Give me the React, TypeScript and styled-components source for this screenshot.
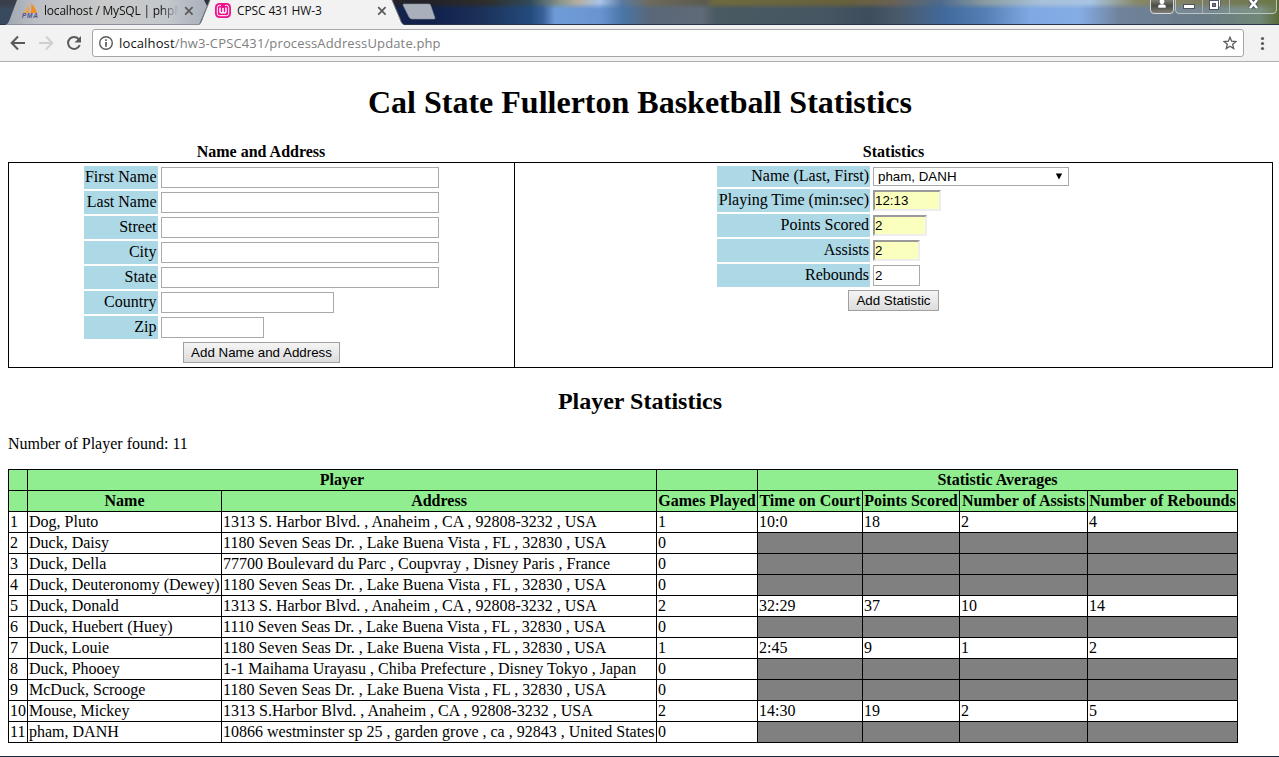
import React from "react";
import styled, { createGlobalStyle } from "styled-components";

const GlobalStyle = createGlobalStyle`
  html, body { margin: 0; padding: 0; background: #fff; overflow: hidden; }
  *, *::before, *::after { box-sizing: border-box; }
`;

const Window = styled.div`
  width: 1279px;
  height: 757px;
  display: flex;
  flex-direction: column;
  overflow: hidden;
  background: #fff;
  border-bottom: 1px solid #16263c;
`;

const TitleBar = styled.header`
  height: 25px;
  flex: none;
  position: relative;
  isolation: isolate;
  background: linear-gradient(90deg, #3a4a5e 0, #10204a 430px, #1b3158 480px, #234a7c 530px, #3a6098 543px, #6f9cd8 555px, #6a94d0 600px, #4a76a8 622px, #596778 650px, #606a78 702px, #4a5a62 715px, #465662 820px, #3d4d5c 870px, #4a5a6c 900px, #416a9c 945px, #557eb4 985px, #80a8e2 1030px, #85ace5 1080px, #70829a 1120px, #6a7c88 1200px, #708878 1260px, #5a6a38 1279px);
  border-bottom: 1px solid #2a3548;

  &::before {
    content: "";
    position: absolute;
    inset: 0;
    z-index: -1;
    background: linear-gradient(90deg, #3a3f49 0, #222228 430px, #2f2f2c 490px, #2f4a5a 530px, #8a9488 560px, #b5afa0 578px, #a8c4e8 600px, #5a7aa0 622px, #6f6a5a 650px, #5a5a50 705px, #6e6a3e 715px, #66603c 850px, #6b6152 890px, #4e6a8c 940px, #8a9ca0 985px, #a8c0d8 1040px, #a8c4e4 1090px, #8a8a6a 1135px, #707050 1200px, #5b6a35 1279px);
    mask-image: linear-gradient(#000 3px, transparent 9px);
  }
`;

const TabArt = styled.svg`
  position: absolute;
  left: 0;
  top: 0;
`;

const TabRow = styled.div`
  position: relative;
  display: flex;
  height: 24px;
`;

const Tab = styled.div<{ $width: number; $pad: number }>`
  width: ${(p) => p.$width}px;
  padding-left: ${(p) => p.$pad}px;
  display: flex;
  align-items: flex-start;
`;

const TabTitle = styled.span<{ $width: number; $fade?: boolean }>`
  width: ${(p) => p.$width}px;
  margin-left: ${(p) => (p.$fade ? 5 : 6)}px;
  white-space: nowrap;
  font: 12px/22px "Open Sans", sans-serif;
  letter-spacing: -0.13px;
  color: #111;
  ${(p) => p.$fade && "letter-spacing: -0.2px; mask-image: linear-gradient(90deg, #000 86%, transparent 99%);"}
`;

const CloseIcon = styled.svg`
  margin-top: 6px;
  flex: none;
`;

const WindowControls = styled.svg`
  position: absolute;
  right: 0;
  top: 0;
`;

const Toolbar = styled.div`
  height: 37px;
  flex: none;
  display: flex;
  align-items: center;
  background: #f2f2f2;
  border-bottom: 1px solid #b0b0b0;
`;

const NavIcons = styled.svg`
  flex: none;
`;

const AddressBar = styled.div`
  width: 1152px;
  height: 28px;
  display: flex;
  align-items: center;
  padding: 0 6px 0 5px;
  background: #fff;
  border: 1px solid #a6a6a6;
  border-radius: 3px;
`;

const Url = styled.span`
  flex: 1;
  margin-left: 5px;
  font: 13px/26px "Open Sans", sans-serif;
  letter-spacing: 0.14px;
  color: #808080;
  white-space: nowrap;
  b { font-weight: 400; color: #111; }
`;

const Page = styled.main`
  flex: 1;
  padding: 0 8px;
  font: 16px/19px "Liberation Serif", "Times New Roman", serif;
  color: #000;
`;

const Title = styled.h1`
  margin: 22px 0 0 1px;
  font-size: 32px;
  line-height: 37px;
  text-align: center;
`;

const Forms = styled.div`
  display: grid;
  grid-template-columns: 506px 759px;
  width: 1265px;
  margin-top: 21px;
`;

const FormHeading = styled.div`
  height: 20px;
  line-height: 20px;
  font-weight: 700;
  text-align: center;
`;

const Panel = styled.form<{ $last?: boolean }>`
  height: 206px;
  border: 1px solid #000;
  border-right-width: ${(p) => (p.$last ? 1 : 0)}px;
  padding-top: 3px;
  display: flex;
  flex-direction: column;
  align-items: center;
`;

const Fields = styled.div<{ $labels: number; $inputs: number }>`
  display: grid;
  grid-template-columns: ${(p) => p.$labels}px ${(p) => p.$inputs}px;
  gap: 2px;
`;

const Label = styled.label`
  display: block;
  padding: 1px 1px 0 0;
  line-height: 20px;
  text-align: right;
  white-space: nowrap;
  background: lightblue;
`;

const SelectLabel = styled(Label)`
  padding-top: 0;
`;

const FieldCell = styled.div`
  padding: 1px;
`;

const Input = styled.input<{ $width: number; $filled?: boolean }>`
  display: block;
  width: ${(p) => p.$width}px;
  height: 21px;
  margin: 0;
  padding: ${(p) => (p.$filled ? "0 0 1px 0" : "0 0 1px 1px")};
  border: ${(p) => (p.$filled ? "2px solid" : "1px solid #a9a9a9")};
  ${(p) => p.$filled && "border-color: #9a9a9a #eee #eee #9a9a9a;"}
  background: ${(p) => (p.$filled ? "#faffbd" : "#fff")};
  border-radius: 0;
  font: 13.33px "Liberation Sans", Arial, sans-serif;
  color: #000;
  outline: none;
`;

const SelectBox = styled.div`
  width: 196px;
  height: 19px;
  display: flex;
  align-items: center;
  justify-content: space-between;
  padding: 0 5px 0 4px;
  border: 1px solid #a9a9a9;
  font: 13.33px/17px "Liberation Sans", Arial, sans-serif;
`;

const Button = styled.button<{ $width: number }>`
  width: ${(p) => p.$width}px;
  height: 21px;
  margin-top: 3px;
  padding: 0;
  border: 1px solid #a0a0a0;
  border-radius: 0;
  background: linear-gradient(#f5f5f5, #dcdcdc);
  font: 13.33px/18px "Liberation Sans", Arial, sans-serif;
  color: #000;
  white-space: nowrap;
`;

const SubTitle = styled.h2`
  margin: 19px 0 0 1px;
  font-size: 24px;
  line-height: 28px;
  text-align: center;
`;

const Count = styled.p`
  margin: 20px 0 16px;
  line-height: 18px;
`;

const StatsTable = styled.table`
  table-layout: fixed;
  width: 1230px;
  border-collapse: separate;
  border-spacing: 0;
  border-top: 1px solid #000;
  border-left: 1px solid #000;
`;

const HeadCell = styled.th`
  height: 21px;
  padding: 0;
  border-right: 1px solid #000;
  border-bottom: 1px solid #000;
  background: lightgreen;
  line-height: 20px;
  white-space: nowrap;
`;

const Cell = styled.td<{ $empty?: boolean }>`
  height: 21px;
  padding: 0 0 0 1px;
  border-right: 1px solid #000;
  border-bottom: 1px solid #000;
  background: ${(p) => (p.$empty ? "gray" : "#fff")};
  line-height: 20px;
  white-space: nowrap;
`;

const addressFields: [string, number][] = [
  ["First Name", 278], ["Last Name", 278], ["Street", 278], ["City", 278],
  ["State", 278], ["Country", 173], ["Zip", 103],
];

const statFields: [string, number, string, boolean][] = [
  ["Playing Time (min:sec)", 68, "12:13", true],
  ["Points Scored", 54, "2", true],
  ["Assists", 47, "2", true],
  ["Rebounds", 47, "2", false],
];

const columns = [19, 194, 435, 101, 105, 97, 128, 150];

const players: [string, string, number, string[]?][] = [
  ["Dog, Pluto", "1313 S. Harbor Blvd. , Anaheim , CA , 92808-3232 , USA", 1, ["10:0", "18", "2", "4"]],
  ["Duck, Daisy", "1180 Seven Seas Dr. , Lake Buena Vista , FL , 32830 , USA", 0],
  ["Duck, Della", "77700 Boulevard du Parc , Coupvray , Disney Paris , France", 0],
  ["Duck, Deuteronomy (Dewey)", "1180 Seven Seas Dr. , Lake Buena Vista , FL , 32830 , USA", 0],
  ["Duck, Donald", "1313 S. Harbor Blvd. , Anaheim , CA , 92808-3232 , USA", 2, ["32:29", "37", "10", "14"]],
  ["Duck, Huebert (Huey)", "1110 Seven Seas Dr. , Lake Buena Vista , FL , 32830 , USA", 0],
  ["Duck, Louie", "1180 Seven Seas Dr. , Lake Buena Vista , FL , 32830 , USA", 1, ["2:45", "9", "1", "2"]],
  ["Duck, Phooey", "1-1 Maihama Urayasu , Chiba Prefecture , Disney Tokyo , Japan", 0],
  ["McDuck, Scrooge", "1180 Seven Seas Dr. , Lake Buena Vista , FL , 32830 , USA", 0],
  ["Mouse, Mickey", "1313 S.Harbor Blvd. , Anaheim , CA , 92808-3232 , USA", 2, ["14:30", "19", "2", "5"]],
  ["pham, DANH", "10866 westminster sp 25 , garden grove , ca , 92843 , United States", 0],
];

const Close = () => (
  <CloseIcon width="10" height="10" viewBox="0 0 10 10">
    <path d="M1.2 1.2l7.4 7.4M8.6 1.2L1.2 8.6" stroke="#5a5a5a" strokeWidth="1.7" />
  </CloseIcon>
);

const BrowserChrome = () => (
  <>
    <TitleBar>
      <TabArt width="450" height="25" viewBox="0 0 450 25">
        <defs>
          <linearGradient id="idle">
            <stop offset="0" stopColor="#9fa6b0" />
            <stop offset=".15" stopColor="#bcbfc4" />
            <stop offset=".5" stopColor="#c9c9c9" />
            <stop offset=".8" stopColor="#c3c8cd" />
            <stop offset="1" stopColor="#a9b0ba" />
          </linearGradient>
        </defs>
        <path d="M6 25C9 23 9.500 20 11 16L17 0H204L207 6 199 25z" fill="url(#idle)" />
        <path d="M6 24.500H199" stroke="#8b9098" />
        <path d="M199 25C201 23 202 20 203 17L210 0H392L400 19C401 22 402 24 404 25z" fill="#f2f2f2" />
        <path d="M199 24.500C201 23 202 20 203 17L210 0M392 0L400 19C401 22 402 24 404 25" fill="none" stroke="#767c85" />
        <path d="M404 4H429Q430 4 430.500 5L435 18Q435 19 434 19H412Q410 19 409 17L403 5Q403 4 404 4z" fill="#a9b0bb" stroke="#8b93a2" strokeWidth=".6" />
      </TabArt>
      <TabRow>
        <Tab $width={204} $pad={22}>
          <svg width="17" height="20" viewBox="0 0 17 20">
            <path d="M6.500 4L7 13H1.500C4 11 5.500 8 6.500 4z" fill="#f5a13c" />
            <path d="M9 3C12 6 14 9 15 13H8.500C9.500 10 9.500 7 9 3z" fill="#f28f24" />
            <text x="0" y="18" fontFamily="Liberation Sans, sans-serif" fontSize="6.500" fontWeight="700" fontStyle="italic" fill="#53548b" textLength="16">PMA</text>
          </svg>
          <TabTitle $width={136} $fade>localhost / MySQL | phpM</TabTitle>
          <span style={{ width: 4 }} />
          <Close />
        </Tab>
        <Tab $width={196} $pad={11}>
          <svg width="16" height="20" viewBox="0 0 16 20">
            <rect x="0" y="3" width="16" height="15" rx="4.500" fill="#f0128c" />
            <path d="M6 5.300H4.500Q2.300 5.300 2.300 7.500V13.500Q2.300 15.700 4.500 15.700H11.500Q13.700 15.700 13.700 13.500V7.500Q13.700 5.300 11.500 5.300H10" fill="none" stroke="#fff" strokeWidth="1" />
            <path d="M5 7.500V11Q5 13 6.500 13T8 11V8M8 11Q8 13 9.500 13T11 11V7.500" fill="none" stroke="#fff" strokeWidth="1.500" />
          </svg>
          <TabTitle $width={140}>CPSC 431 HW-3</TabTitle>
          <Close />
        </Tab>
      </TabRow>
      <WindowControls width="130" height="20" viewBox="1149 0 130 20">
        <defs>
          <linearGradient id="glass" x2="0" y2="1">
            <stop offset="0" stopColor="#8c8c80" />
            <stop offset=".5" stopColor="#4b4b47" />
            <stop offset="1" stopColor="#85857c" />
          </linearGradient>
        </defs>
        <path d="M1150.500 -2V10Q1150.500 13.500 1154 13.500H1170Q1173.500 13.500 1173.500 10V-2" fill="url(#glass)" stroke="#d5d8d8" />
        <path d="M1175.500 -2V10Q1175.500 13.500 1179 13.500H1273Q1276.500 13.500 1276.500 10V-2" fill="#ffffff18" stroke="#bcc5c5" />
        <path d="M1202.500 0V13M1229.500 0V13" stroke="#a7b0ad" />
        <path d="M1158 8V5.500Q1159 4 1162 4T1166 5.500V8z" fill="#fff" stroke="#444" strokeWidth=".5" />
        <circle cx="1162" cy="1.800" r="2.400" fill="#fff" />
        <rect x="1183.500" y="4.500" width="11" height="4" fill="#fff" stroke="#505365" />
        <path d="M1213 -1H1219.500V6.500" fill="none" stroke="#505365" strokeWidth="3" />
        <path d="M1213 0H1219.500V6.500" fill="none" stroke="#fff" strokeWidth="1.200" />
        <rect x="1209.500" y=".5" width="9" height="9" fill="#fff" stroke="#505365" />
        <rect x="1212.500" y="3.500" width="3" height="3" fill="#777" stroke="#505365" />
        <path d="M1250 0L1257 8M1257 0L1250 8" stroke="#505365" strokeWidth="4.500" />
        <path d="M1250 0L1257 8M1257 0L1250 8" stroke="#fff" strokeWidth="2.600" />
      </WindowControls>
    </TitleBar>
    <Toolbar>
      <NavIcons width="92" height="36" viewBox="0 25 92 36">
        <path d="M25 43H12M18 36.500L11.700 43L18 49.500" fill="none" stroke="#5a5a5a" strokeWidth="2" />
        <path d="M39 43H52M46 36.500L52.300 43L46 49.500" fill="none" stroke="#d0d0d0" strokeWidth="2" />
        <path d="M79 39.500A6 6 0 1 0 79.700 45" fill="none" stroke="#5a5a5a" strokeWidth="2" />
        <path d="M81 36V42.500H74.500z" fill="#5a5a5a" />
      </NavIcons>
      <AddressBar>
        <svg width="16" height="16" viewBox="0 0 16 16">
          <circle cx="8" cy="8" r="6.300" fill="none" stroke="#5a5a5a" strokeWidth="1.400" />
          <path d="M8 7V11.700M8 4.300V5.900" stroke="#5a5a5a" strokeWidth="1.700" />
        </svg>
        <Url><b>localhost</b>/hw3-CPSC431/processAddressUpdate.php</Url>
        <svg width="14" height="14" viewBox="0 0 14 14">
          <path d="M7 1.300L8.700 5.200 13 5.500 9.700 8.300 10.700 12.500 7 10.200 3.300 12.500 4.300 8.300 1 5.500 5.300 5.200z" fill="none" stroke="#5a5a5a" strokeWidth="1.300" />
        </svg>
      </AddressBar>
      <svg width="35" height="36" viewBox="1244 25 35 36">
        <circle cx="1262.500" cy="38.500" r="1.600" fill="#5a5a5a" />
        <circle cx="1262.500" cy="43.500" r="1.600" fill="#5a5a5a" />
        <circle cx="1262.500" cy="48.500" r="1.600" fill="#5a5a5a" />
      </svg>
    </Toolbar>
  </>
);

const App = () => (
  <>
    <GlobalStyle />
    <Window>
      <BrowserChrome />
      <Page>
        <Title>Cal State Fullerton Basketball Statistics</Title>
        <Forms>
          <FormHeading>Name and Address</FormHeading>
          <FormHeading>Statistics</FormHeading>
          <Panel>
            <Fields $labels={74} $inputs={280}>
              {addressFields.map(([name, width]) => (
                <React.Fragment key={name}>
                  <Label>{name}</Label>
                  <FieldCell><Input $width={width} /></FieldCell>
                </React.Fragment>
              ))}
            </Fields>
            <Button type="button" $width={157}>Add Name and Address</Button>
          </Panel>
          <Panel $last>
            <Fields $labels={153} $inputs={198}>
              <SelectLabel>Name (Last, First)</SelectLabel>
              <FieldCell>
                <SelectBox>
                  pham, DANH
                  <svg width="8" height="7" viewBox="0 0 8 7"><path d="M.8 .5H7.200L4 6.500z" fill="#000" /></svg>
                </SelectBox>
              </FieldCell>
              {statFields.map(([name, width, value, filled]) => (
                <React.Fragment key={name}>
                  <Label>{name}</Label>
                  <FieldCell><Input $width={width} $filled={filled} defaultValue={value} /></FieldCell>
                </React.Fragment>
              ))}
            </Fields>
            <Button type="button" $width={91}>Add Statistic</Button>
          </Panel>
        </Forms>
        <SubTitle>Player Statistics</SubTitle>
        <Count>Number of Player found: 11</Count>
        <StatsTable>
          <colgroup>
            {columns.map((w, i) => <col key={i} width={w} />)}
          </colgroup>
          <thead>
            <tr>
              <HeadCell /><HeadCell colSpan={2}>Player</HeadCell><HeadCell />
              <HeadCell colSpan={4}>Statistic Averages</HeadCell>
            </tr>
            <tr>
              {["", "Name", "Address", "Games Played", "Time on Court", "Points Scored", "Number of Assists", "Number of Rebounds"].map((h) => (
                <HeadCell key={h}>{h}</HeadCell>
              ))}
            </tr>
          </thead>
          <tbody>
            {players.map(([name, address, games, stats], i) => (
              <tr key={name}>
                <Cell>{i + 1}</Cell>
                <Cell>{name}</Cell>
                <Cell>{address}</Cell>
                <Cell>{games}</Cell>
                {[0, 1, 2, 3].map((s) => (
                  <Cell key={s} $empty={!stats}>{stats?.[s]}</Cell>
                ))}
              </tr>
            ))}
          </tbody>
        </StatsTable>
      </Page>
    </Window>
  </>
);

export default App;
